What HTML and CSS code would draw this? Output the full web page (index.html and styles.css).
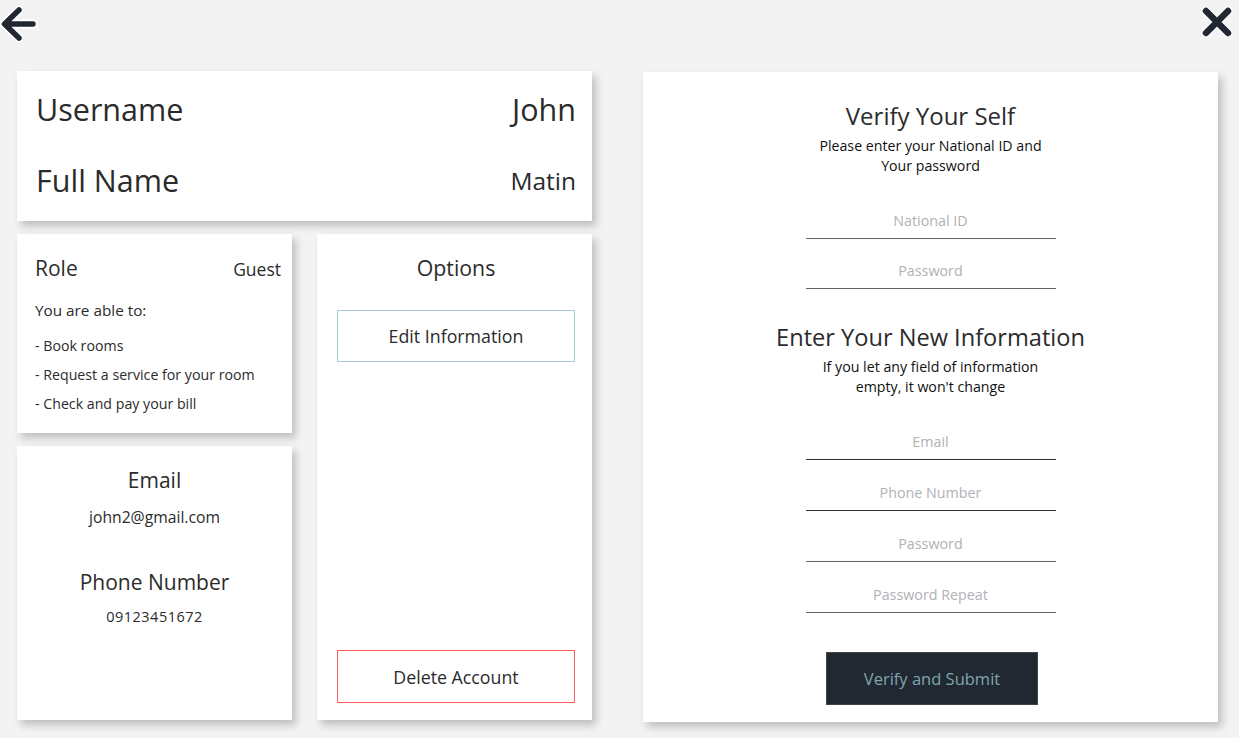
FILE: index.html
```html
<!DOCTYPE html>
<html>
<head>
<meta charset="utf-8">
<link rel="stylesheet" href="styles.css">
</head>
<body>
<div class="topbar">
  <svg class="icon back" width="40" height="44" viewBox="0 0 40 44">
    <path d="M34 24 H7 M20 10 L5.5 24 L20 38" fill="none" stroke="#fff" stroke-width="9" stroke-linecap="round" stroke-linejoin="round"/>
    <path d="M34 24 H7 M20 10 L5.5 24 L20 38" fill="none" stroke="#222831" stroke-width="5.5" stroke-linecap="round" stroke-linejoin="round"/>
  </svg>
  <svg class="icon close" width="36" height="36" viewBox="0 0 36 36">
    <path d="M7 7 L29 29 M29 7 L7 29" fill="none" stroke="#fff" stroke-width="9.5" stroke-linecap="round"/>
    <path d="M7 7 L29 29 M29 7 L7 29" fill="none" stroke="#222831" stroke-width="6.5" stroke-linecap="round"/>
  </svg>
</div>
<div class="main">
  <div class="left">
    <div class="card names">
      <div class="row"><span class="big">Username</span><span class="big">John</span></div>
      <div class="row"><span class="big">Full Name</span><span class="mid">Matin</span></div>
    </div>
    <div class="card role">
      <div class="role-head"><span class="h2">Role</span><span class="guest">Guest</span></div>
      <p class="able">You are able to:</p>
      <ul class="perms">
        <li>- Book rooms</li>
        <li>- Request a service for your room</li>
        <li>- Check and pay your bill</li>
      </ul>
    </div>
    <div class="card options">
      <div class="h2 center">Options</div>
      <button class="btn edit">Edit Information</button>
      <div class="spacer"></div>
      <button class="btn delete">Delete Account</button>
    </div>
    <div class="card contact">
      <div class="h2 center">Email</div>
      <div class="val">john2@gmail.com</div>
      <div class="h2 center second">Phone Number</div>
      <div class="val phone">09123451672</div>
    </div>
  </div>
  <div class="card verify">
    <h1 class="title">Verify Your Self</h1>
    <p class="sub">Please enter your National ID and<br>Your password</p>
    <div class="fields first">
      <input class="field gray" placeholder="National ID">
      <input class="field gray" type="password" placeholder="Password">
    </div>
    <h1 class="title t2">Enter Your New Information</h1>
    <p class="sub sub2">If you let any field of information<br>empty, it won't change</p>
    <div class="fields second">
      <input class="field dark" placeholder="Email">
      <input class="field dark" placeholder="Phone Number">
      <input class="field gray" type="password" placeholder="Password">
      <input class="field gray" type="password" placeholder="Password Repeat">
    </div>
    <button class="submit">Verify and Submit</button>
  </div>
</div>
</body>
</html>
```

FILE: styles.css
```css
* { box-sizing: border-box; }
body {
  margin: 0;
  background: #f3f3f3;
  font-family: "Open Sans", "Noto Sans", sans-serif;
  color: #2b2b2b;
  width: 1239px;
  height: 738px;
  overflow: hidden;
}
.topbar {
  display: flex;
  justify-content: space-between;
  align-items: flex-start;
  height: 71px;
  padding: 0 4px 0 0;
}
.back { margin-top: 0; margin-left: -1px; }
.close { margin-top: 4px; }
.main {
  display: flex;
  gap: 51px;
  padding-left: 17px;
}
.card {
  background: #fff;
  box-shadow: 4px 5px 8px rgba(0,0,0,0.22);
}
.left {
  display: grid;
  grid-template-columns: 275px 275px;
  grid-template-rows: 150px 199px 274px;
  gap: 13px 25px;
  width: 575px;
}
.names {
  grid-column: 1 / 3;
  display: flex;
  flex-direction: column;
  justify-content: center;
  padding: 0 16px 3px 19px;
}
.row {
  display: flex;
  justify-content: space-between;
  align-items: center;
  height: 71px;
}
.big { font-size: 30.5px; }
.mid { font-size: 24.5px; }
.role {
  grid-column: 1; grid-row: 2;
  padding: 20px 11px 0 18px;
}
.role-head {
  display: flex; justify-content: space-between; align-items: baseline;
  line-height: 29px;
}
.h2 { font-size: 21px; line-height: 29px; }
.center { text-align: center; }
.guest { font-size: 17.5px; }
.able { font-size: 15.3px; line-height: 20px; margin: 16px 0 16px; }
.perms { list-style: none; margin: 0; padding: 0; font-size: 14.2px; }
.perms li { line-height: 20px; margin-bottom: 9px; }
.options {
  grid-column: 2; grid-row: 2 / 4;
  display: flex; flex-direction: column;
  padding: 19px 17px 17px 20px;
}
.options .h2 { font-size: 21.3px; }
.spacer { flex: 1; }
.btn {
  font-family: inherit;
  background: #fff;
  font-size: 17.8px;
  color: #2b2b2b;
  height: 53px;
  width: 238px;
}
.edit { border: 1px solid #a6cfd3; margin-top: 28px; height: 52px; }
.delete { border: 1px solid #ff5c5c; }
.contact {
  grid-column: 1; grid-row: 3;
  padding-top: 20px;
  text-align: center;
}
.val { font-size: 15.7px; line-height: 21px; margin-top: 12px; }
.second { margin-top: 40px; }
.phone { font-size: 14.5px; letter-spacing: 0.5px; margin-top: 10px; line-height: 20px; }
.verify {
  width: 575px;
  height: 650px;
  margin-top: 1px;
  display: flex; flex-direction: column; align-items: center;
  padding-top: 26px;
}
.title { font-size: 24px; font-weight: 400; margin: 0; line-height: 36px; }
.t2 { margin-top: 30px; font-size: 23.6px; }
.sub { font-size: 14.2px; margin: 2px 0 0; text-align: center; line-height: 20px; color: #111; }
.sub2 { margin-top: 2px; }
.fields { display: flex; flex-direction: column; gap: 13px; margin-top: 26px; }
.fields.second { margin-top: 26px; gap: 14px; }
.field {
  width: 250px; height: 37px;
  border: none;
  border-bottom: 1.5px solid #5f6368;
  font-family: inherit;
  font-size: 14.3px;
  text-align: center;
  background: transparent;
  outline: none;
}
.field.dark { border-bottom-color: #2a2f38; }
.field::placeholder { color: #b3b0b5; }
.submit {
  margin-top: 39px;
  margin-left: 3px;
  width: 212px; height: 53px;
  background: #222831;
  border: 1px solid #444;
  color: #7fa6ae;
  font-family: inherit;
  font-size: 16.5px;
}
```
